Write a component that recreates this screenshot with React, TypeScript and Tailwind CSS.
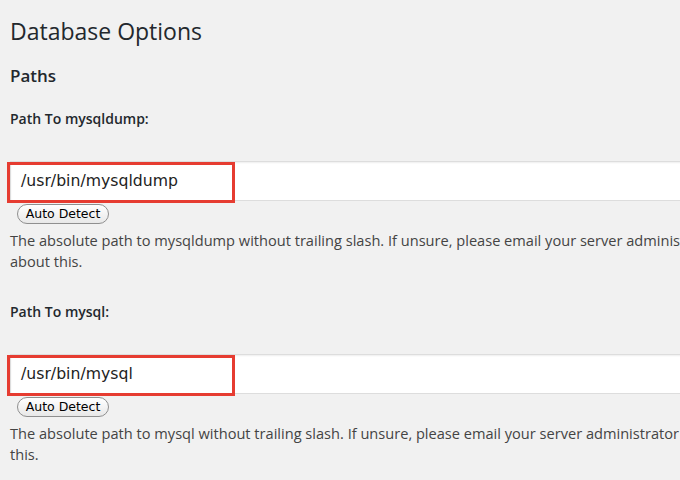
import React from "react";

function PathField({ label, value, desc }: { label: string; value: string; desc: React.ReactNode }) {
  return (
    <div className="flex flex-col">
      <div className="text-[14px] leading-[21px] font-semibold text-[#23282d]">{label}</div>
      <div className="relative mt-[32px] w-[700px]">
        <div
          className="h-[40px] bg-white border border-[#dddddd] shadow-[inset_0_1px_2px_rgba(0,0,0,0.07)] flex items-center pl-[10px] text-[15.7px] text-[#222]"
          style={{ fontFamily: '"DejaVu Sans", "Liberation Sans", sans-serif' }}
        >
          {value}
        </div>
        <div className="absolute left-[-3px] top-[1px] w-[228px] h-[41px] border-[3px] border-[#e63c31]" />
      </div>
      <div className="mt-[3px] ml-[7px] flex">
        <button
          className="h-[20px] w-[92px] rounded-full border border-[#8f8f8f] bg-gradient-to-b from-white to-[#e8e8e8] text-[12.5px] leading-[18px] text-black"
          style={{ fontFamily: '"DejaVu Sans", "Liberation Sans", sans-serif' }}
        >
          Auto Detect
        </button>
      </div>
      <p className="mt-[6px] text-[14.6px] leading-[21px] text-[#444] w-[760px]">{desc}</p>
    </div>
  );
}

export default function App() {
  return (
    <div
      className="w-[680px] h-[480px] overflow-hidden bg-[#f1f1f1] pl-[10px] pt-[17px]"
      style={{ fontFamily: '"Open Sans", "Noto Sans", sans-serif' }}
    >
      <h1 className="text-[23px] leading-[29px] font-normal text-[#23282d]">Database Options</h1>
      <h2 className="mt-[18px] text-[17px] leading-[24px] font-semibold text-[#23282d]">Paths</h2>
      <div className="mt-[20px]">
        <PathField
          label="Path To mysqldump:"
          value="/usr/bin/mysqldump"
          desc={
            <>
              The absolute path to mysqldump without trailing slash. If unsure, please email your server administrator
              <br />
              about this.
            </>
          }
        />
      </div>
      <div className="mt-[29px]">
        <PathField
          label="Path To mysql:"
          value="/usr/bin/mysql"
          desc={
            <>
              The absolute path to mysql without trailing slash. If unsure, please email your server administrator about
              <br />
              this.
            </>
          }
        />
      </div>
    </div>
  );
}
